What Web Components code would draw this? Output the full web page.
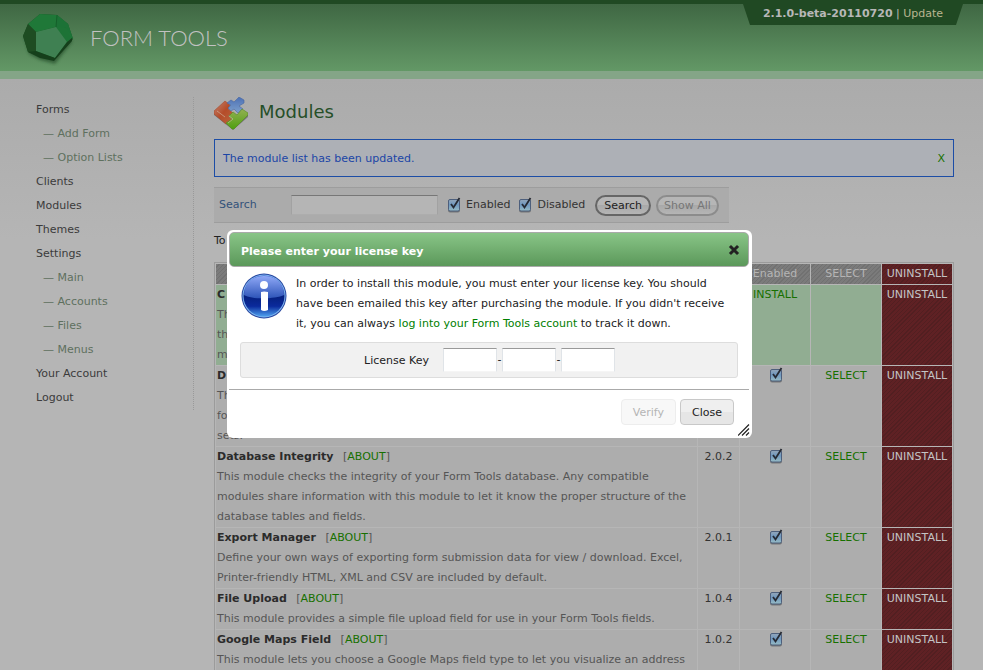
<!DOCTYPE html>
<html lang="en">
<head>
<meta charset="utf-8">
<title>Form Tools - Modules</title>
<style>
html,body{margin:0;height:100%;overflow:hidden}
body{background:linear-gradient(#ababab 79px,#b5b5b5 240px);font:11px/20px "DejaVu Sans",sans-serif;color:#333}
</style>
</head>
<body>
<ft-app></ft-app>
<script>
const define=(name,html,setup)=>customElements.define(name,class extends HTMLElement{
  constructor(){
    super();
    const t=document.createElement('template');
    t.innerHTML=html;
    this.attachShadow({mode:'open'}).append(t.content.cloneNode(true));
  }
  connectedCallback(){if(setup&&!this.ready){this.ready=true;setup(this,this.shadowRoot)}}
});

define('ft-logo',`<style>:host{display:block}svg{display:block}</style>
<svg width="56" height="56" viewBox="0 0 56 56" aria-hidden="true">
<defs><filter id="s" x="-30%" y="-30%" width="160%" height="160%"><feGaussianBlur stdDeviation="1.5"/></filter></defs>
<path d="M4 25L9 42 20 48 35 52 52 30 48 20z" fill="#1c4422" opacity=".6" filter="url(#s)" transform="translate(0 2)"/>
<path d="M8 14L20 4 37 5 48 14 53 29 34 50 20 47 8 42 3 26z" fill="#1b4d22"/>
<path d="M8 14L20 4 37 5 48 14 53 29 36 17 16 22z" fill="#1f7838"/>
<path d="M37 5L48 14 53 29 46 18 36 17z" fill="#1c7236"/>
<path d="M8 14L3 26 8 42 16 41 16 22z" fill="#1e4c22"/>
<path d="M16 22L36 17 46 18 52 29 35 48 16 42z" fill="#1d7336"/>
<path d="M16 22L36 17 47 32 35 48 16 41z" fill="#3f8052"/>
<path d="M16 41L35 48 47 32 52 28 52 31 34 51 20 48 8 42z" fill="#153f1b"/>
<path d="M36 17L37 5" stroke="#155f2a" fill="none"/>
</svg>`);

define('ft-header',`<style>
:host{display:flex;justify-content:space-between;align-items:flex-start;height:79px;box-sizing:border-box;border-bottom:8px solid #84a587;background:linear-gradient(#204923 4px,#3f6743 4px,#639866 100%)}
.brand{display:flex;align-items:center;gap:14px;padding:10px 0 0 20px;margin:0}
.name{font:300 22px/32px Lato,sans-serif;color:#c2c2c2}
.ver{margin-right:20px;width:220px;height:25px;line-height:27px;font-size:11px;text-align:center;background:#204923;clip-path:polygon(0 4px,220px 4px,213px 100%,7px 100%);color:#b7b7b7;white-space:nowrap}
a{color:#b9b690;text-decoration:none}
</style>
<div class="brand"><ft-logo></ft-logo><span class="name">FORM TOOLS</span></div>
<div class="ver"><b>2.1.0-beta-20110720</b> | <a href="#">Update</a></div>`);

define('ft-nav',`<style>
:host{display:block;width:157px;border-right:1px dotted #999;align-self:flex-start}
nav{padding-top:1px}
a{display:block;line-height:24px;color:#3b3b3b;text-decoration:none}
a.sub{color:#5e705e;padding-left:7px}
</style><nav></nav>`,(el,root)=>{
  const nav=root.querySelector('nav');
  for(const t of ['Forms','-Add Form','-Option Lists','Clients','Modules','Themes','Settings','-Main','-Accounts','-Files','-Menus','Your Account','Logout']){
    const a=document.createElement('a');
    a.href='#';
    a.textContent=t.replace(/^-/,'— ');
    if(t[0]==='-')a.className='sub';
    nav.append(a);
  }
});

define('ft-check',`<style>
:host{display:inline-block}
label{display:flex;align-items:center;gap:5px}
input{appearance:none;margin:0;width:14px;height:16px;background:url("data:image/svg+xml,%3Csvg xmlns='http://www.w3.org/2000/svg' width='14' height='16'%3E%3Cdefs%3E%3ClinearGradient id='g' x2='0' y2='1'%3E%3Cstop stop-color='%2394a6b9'/%3E%3Cstop offset='.45' stop-color='%236f98c0'/%3E%3Cstop offset='1' stop-color='%2398bcc4'/%3E%3C/linearGradient%3E%3C/defs%3E%3Crect x='1' y='3' width='12' height='12.500' rx='2' fill='%23777'/%3E%3Crect x='1.5' y='2.5' width='11' height='11.500' rx='1.500' fill='url(%23g)' stroke='%234d5f7c'/%3E%3Cpath d='M4 7L6.500 10.500 12.500 1' fill='none' stroke='%23262a33' stroke-width='1.800'/%3E%3C/svg%3E") no-repeat}
</style><label><input type="checkbox" checked><slot></slot></label>`,(el,root)=>{
  if(el.hasAttribute('name'))root.querySelector('input').setAttribute('aria-label',el.getAttribute('name'));
});

define('ft-title',`<style>
:host{display:flex;align-items:center;gap:11px;height:34px}
h1{margin:0;font:18px/28px "DejaVu Sans",sans-serif;color:#264f28;padding-bottom:4px}
svg{display:block}
</style>
<svg width="34" height="34" viewBox="0 0 34 34" aria-hidden="true">
<defs><linearGradient id="r" x2="1" y2="1"><stop stop-color="#c28674"/><stop offset=".5" stop-color="#b54c29"/><stop offset="1" stop-color="#b9663e"/></linearGradient>
<linearGradient id="b" x2="0" y2="1"><stop stop-color="#4c70b4"/><stop offset="1" stop-color="#7da0cc"/></linearGradient>
<linearGradient id="g" x2="0" y2="1"><stop stop-color="#93b052"/><stop offset="1" stop-color="#4fa010"/></linearGradient></defs>
<path d="M0 15L19 31 34 17 34 20 19 33 0 18z" fill="#777"/>
<path d="M0 14L11 4 16 8 14 12 19 16 14 19 18 23 12 27 0 17z" fill="url(#r)" stroke="#a74a2d" stroke-width=".6"/>
<path d="M13 6L17 3 20 5 25 0 30 3 30 6 25 9 29 12 24 16 20 12 17 14 14 11 17 8z" fill="url(#b)" stroke="#4666a2" stroke-width=".6"/>
<path d="M15 19L19 15 23 18 28 12 34 16 34 18 20 32 18 32 12 26 18 22z" fill="url(#g)" stroke="#558d1c" stroke-width=".6"/>
<path d="M15 19L19 22 14 26M3 14L11 20" stroke="#d4bda6" fill="none" opacity=".6"/>
</svg><h1><slot></slot></h1>`);

define('ft-message',`<style>
:host{display:flex;justify-content:space-between;align-items:center;height:34px;padding:2px 8px 0;border:1px solid #1c4da6;background:#adb0b6;color:#1b45a6}
a{color:#177000;text-decoration:none}
</style><span><slot></slot></span><a href="#">X</a>`);

define('ft-search',`<style>
:host{display:block;max-width:515px;background:#ababab;border:solid #9d9d9d;border-width:1px 0;color:#333}
form{display:flex;align-items:center;height:34px;padding:0 7px 0 5px;white-space:nowrap}
label{width:72px;color:#33527a}
input{box-sizing:border-box;width:147px;height:20px;margin-right:9px;padding:2px;border:1px solid #a2a2a2;border-top-color:#777;border-bottom-color:#adadad;background:#b5b5b5;font:inherit}
ft-check{margin-right:8px}
button{flex:none;height:21px;box-sizing:border-box;padding:0 7px;border:2px solid #666;border-radius:11px;background:linear-gradient(#b6b6b6 50%,#a9a9a9 50%,#b5b5b5);font:inherit;line-height:17px;color:#222}
button:last-child{margin-left:5px;padding:0 6px;border-color:#8c8c8c;color:#777}
button:first-of-type{margin-left:2px}
</style>
<form onsubmit="return false"><label for="q">Search</label><input id="q" type="text"><ft-check>Enabled</ft-check><ft-check>Disabled</ft-check><button type="submit">Search</button><button type="button" disabled>Show All</button></form>`);

define('ft-modules',`<style>
:host{display:block}
table{width:100%;table-layout:fixed;border:1px solid #9b9b9b;border-spacing:1px;border-collapse:separate;background:#b6b6b6}
td,th{padding:0;vertical-align:top;background:#adadad;font-weight:normal;text-align:center}
thead th{height:20px;background:repeating-linear-gradient(135deg,#7b7b7b 0 2px,#717171 2px 3px);color:#b5b5b5}
td:first-child{text-align:left;padding:0 2px 0 1px;color:#555}
td b{color:#2b2b2b;margin-right:6px}
a{color:#177000;text-decoration:none}
tr.new td{background:#91ad92}
tr th:last-child,tr td:last-child,tr.new td:last-child{background:repeating-linear-gradient(135deg,#5f2124 0 2px,#521f21 2px 3px)}
td:last-child a,th:last-child{color:#c4c4c4}
ft-check{vertical-align:top;padding:1px 0 0 1px}
.v{width:41px}.c{width:70px}
</style>
<table><colgroup><col><col class="v"><col class="c"><col class="c"><col class="c"></colgroup>
<thead><tr><th></th><th></th><th>Enabled</th><th>SELECT</th><th>UNINSTALL</th></tr></thead><tbody></tbody></table>`,(el,root)=>{
  const rows=[
    ['C','','Th<br>th<br>m'],
    ['D','','Th<br>fo<br>sets.'],
    ['Database Integrity','2.0.2','This module checks the integrity of your Form Tools database. Any compatible modules share information with this module to let it know the proper structure of the database tables and fields.'],
    ['Export Manager','2.0.1','Define your own ways of exporting form submission data for view / download. Excel, Printer-friendly HTML, XML and CSV are included by default.'],
    ['File Upload','1.0.4','This module provides a simple file upload field for use in your Form Tools fields.'],
    ['Google Maps Field','1.0.2','This module lets you choose a Google Maps field type to let you visualize an address']];
  root.querySelector('tbody').innerHTML=rows.map(([n,v,d],i)=>`<tr${i?'':' class="new"'}><td><b>${n}</b>${v?' [<a href="#">ABOUT</a>]':''}<div>${d}</div></td><td>${v}</td><td>${i?`<ft-check name="Enable ${n}"></ft-check>`:'<a href="#">INSTALL</a>'}</td><td>${i?'<a href="#">SELECT</a>':''}</td><td><a href="#">UNINSTALL</a></td></tr>`).join('');
});

define('ft-info',`<style>:host{display:block}svg{display:block}</style>
<svg width="46" height="46" viewBox="0 0 46 46" aria-hidden="true">
<defs><linearGradient id="a" x2="0" y2="1"><stop stop-color="#3a5cc8"/><stop offset=".3" stop-color="#3a62cc"/><stop offset=".5" stop-color="#06207e"/><stop offset=".75" stop-color="#0a2a9c"/><stop offset="1" stop-color="#4ea0ee"/></linearGradient>
<linearGradient id="h" x2="0" y2="1"><stop stop-color="#8fa8f6"/><stop offset="1" stop-color="#2d54b8"/></linearGradient></defs>
<circle cx="23" cy="23" r="22.500" fill="#2846a0"/><circle cx="23" cy="23" r="21.500" fill="#7db4ee"/><circle cx="23" cy="23" r="20.500" fill="url(#a)"/>
<path d="M3 22C3 10 12 3 23 3s20 7 20 19c-8 4-32 5-40 0z" fill="url(#h)"/>
<circle cx="23" cy="12" r="4" fill="#fff"/><path d="M20 19q3-1 7 0v18q-4 2-7 0z" fill="#fff"/>
</svg>`);

define('ft-dialog',`<style>
:host{position:fixed;inset:0;display:flex;align-items:center;justify-content:center;padding:0 4px 2px 0}
section{position:relative;box-sizing:border-box;width:525px;padding:2px 3px 0 2px;border-radius:6px;background:#fff;color:#222}
header{display:flex;align-items:center;justify-content:space-between;height:33px;padding:0 8px 0 11px;border:1px solid #aaa;border-radius:5px;background:linear-gradient(#89c587,#5b985a)}
h2{margin:0;font:bold 11px/20px "DejaVu Sans",sans-serif;color:#fff;padding-top:4px}
.x{padding:0;border:0;background:none;width:12px;height:12px}
svg{display:block}
.msg{display:flex;gap:9px;padding:6px 12px 0}
.msg p{margin:0;padding-top:1px;flex:1;white-space:nowrap}
ft-info{flex:none}
a{color:#008000;text-decoration:none}
.key{display:flex;align-items:center;justify-content:center;height:34px;margin:8px 11px 11px;padding-left:1px;border:1px solid #ddd;border-radius:3px;background:#f1f1f1}
.key label{margin-right:14px;padding-top:2px}
.key input{box-sizing:border-box;width:54px;height:24px;padding:2px;border:1px solid #e0e4e8;border-top-color:#999;border-bottom-color:#f5f5f5;font:inherit}
.key span{width:5px;text-align:center}
footer{display:flex;justify-content:flex-end;gap:4px;padding:9px 15px 13px;border-top:1px solid #aaa}
footer button{box-sizing:border-box;height:26px;padding:1px 11px 0;border:1px solid #c8c8c8;border-radius:4px;background:linear-gradient(#efefef 50%,#e6e6e6 50%);font:inherit;color:#222}
footer button:disabled{border-color:#ededed;background:#f8f8f8;color:#b5b5b5}
.grip{position:absolute;right:2px;bottom:2px}
</style>
<section role="dialog" aria-labelledby="t">
<header><h2 id="t">Please enter your license key</h2><button class="x" aria-label="Close dialog"><svg width="12" height="12" viewBox="0 0 12 12"><path d="M3 3l6 6M9 3l-6 6" stroke="#222" stroke-width="3" stroke-linecap="square"/></svg></button></header>
<div class="msg"><ft-info></ft-info><p><slot></slot></p></div>
<div class="key"><label for="k">License Key</label><input id="k" type="text"><span>-</span><input type="text" aria-label="License key part 2"><span>-</span><input type="text" aria-label="License key part 3"></div>
<footer><button disabled>Verify</button><button>Close</button></footer>
<svg class="grip" width="12" height="12" viewBox="0 0 12 12" aria-hidden="true"><path d="M0 11.500L11 .5M4 11.500L11 4.500M8 11.500L11 8.500" stroke="#222" stroke-width="1.200" fill="none"/></svg>
</section>`);

define('ft-app',`<style>
:host{display:block}
.body{display:flex;gap:20px;padding:18px 29px 0 36px}
main{flex:1;min-width:0}
ft-message{margin-top:8px}
ft-search{margin:10px 0 8px}
.intro{margin:0 0 11px;color:#222}
ft-dialog a{color:#008000;text-decoration:none}
</style>
<ft-header></ft-header>
<div class="body"><ft-nav></ft-nav>
<main><ft-title>Modules</ft-title><ft-message>The module list has been updated.</ft-message><ft-search></ft-search><p class="intro">To</p><ft-modules></ft-modules></main></div>
<ft-dialog>In order to install this module, you must enter your license key. You should<br>have been emailed this key after purchasing the module. If you didn't receive<br>it, you can always <a href="#">log into your Form Tools account</a> to track it down.</ft-dialog>`);
</script>
</body>
</html>
